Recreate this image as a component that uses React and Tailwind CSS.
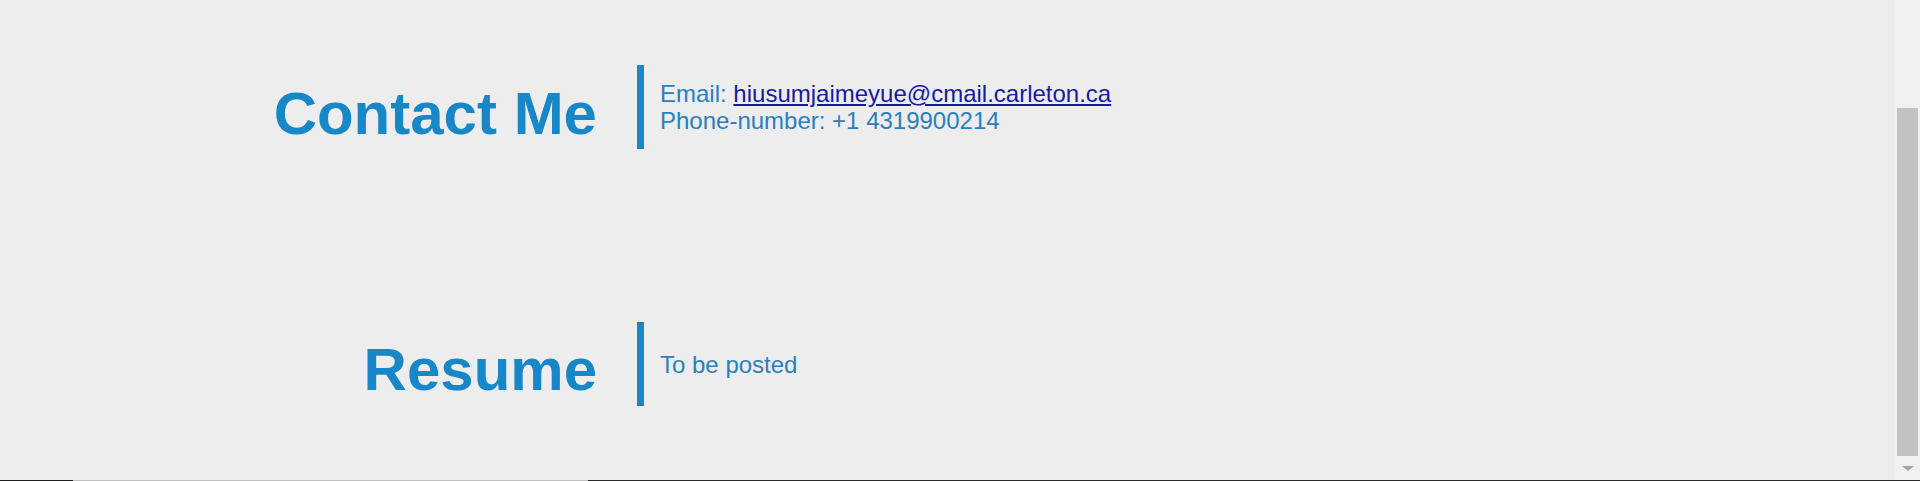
import React from "react";

function Section({ title, titlePad, children }) {
  return (
    <div className="flex items-start">
      <h2
        className={`w-[597px] shrink-0 text-right text-[60px] font-bold leading-[69px] text-[#1787c7] ${titlePad}`}
      >
        {title}
      </h2>
      <div className="ml-[40px] flex h-[84px] flex-col justify-center border-l-[7px] border-[#1787c7] pl-[16px] text-[24px] leading-[27px] text-[#2a80bd]">
        {children}
      </div>
    </div>
  );
}

export default function App() {
  return (
    <div
      className="flex h-[481px] w-[1920px] flex-col overflow-hidden bg-[#ededed]"
      style={{ fontFamily: '"Liberation Sans", Arial, sans-serif' }}
    >
      <div className="flex min-h-0 flex-1">
        <main className="flex flex-1 flex-col gap-[173px] pt-[65px]">
          <Section title="Contact Me" titlePad="pt-[14px]">
            <p>
              Email:{" "}
              <a href="#" className="text-[#1a1aa0] underline">
                hiusumjaimeyue@cmail.carleton.ca
              </a>
            </p>
            <p>Phone-number: +1 4319900214</p>
          </Section>
          <Section title="Resume" titlePad="pt-[13px]">
            <p>To be posted</p>
          </Section>
        </main>
        <div className="flex w-[25px] shrink-0 flex-col items-center bg-[#f0f0f0] pt-[108px]">
          <div className="h-[348px] w-[21px] bg-[#c1c1c1]" />
          <div className="mt-[10px] h-0 w-0 border-x-[6px] border-t-[5px] border-x-transparent border-t-[#a3a3a3]" />
        </div>
      </div>
      <div className="flex h-px shrink-0">
        <div className="w-[73px] bg-[#1f1f1f]" />
        <div className="w-[515px] bg-[#c0c0c0]" />
        <div className="flex-1 bg-[#2a2a2a]" />
      </div>
    </div>
  );
}
